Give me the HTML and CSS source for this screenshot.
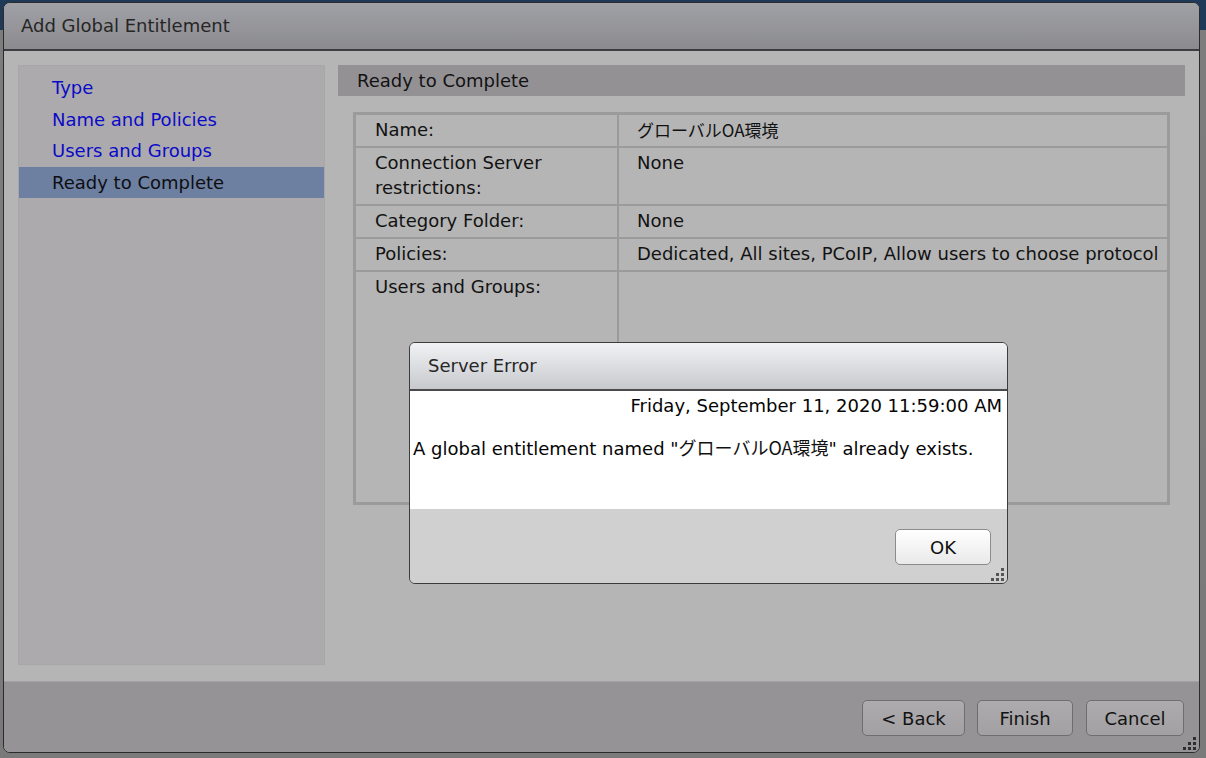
FILE: index.html
```html
<!DOCTYPE html>
<html>
<head>
<meta charset="utf-8">
<link rel="stylesheet" href="styles.css">
</head>
<body>
<div class="window">
  <div class="win-title">Add Global Entitlement</div>
  <div class="win-body">
    <nav class="steps">
      <div class="step link">Type</div>
      <div class="step link">Name and Policies</div>
      <div class="step link">Users and Groups</div>
      <div class="step current">Ready to Complete</div>
    </nav>
    <section class="content">
      <div class="section-head">Ready to Complete</div>
      <table class="summary">
        <tr class="r-name"><td class="k">Name:</td><td class="v jp">グローバルOA環境</td></tr>
        <tr><td class="k">Connection Server restrictions:</td><td class="v">None</td></tr>
        <tr><td class="k">Category Folder:</td><td class="v">None</td></tr>
        <tr><td class="k">Policies:</td><td class="v">Dedicated, All sites, PCoIP, Allow users to choose protocol</td></tr>
        <tr class="r-users"><td class="k">Users and Groups:</td><td class="v"></td></tr>
      </table>
    </section>
  </div>
  <div class="win-foot">
    <button class="btn b-back">&lt; Back</button>
    <button class="btn b-finish">Finish</button>
    <button class="btn b-cancel">Cancel</button>
  </div>
  <svg class="grip grip-main" width="14" height="14" viewBox="0 0 14 14"><g fill="#2e2e2e"><rect x="10" y="1" width="3" height="3"/><rect x="5" y="6" width="3" height="3"/><rect x="10" y="6" width="3" height="3"/><rect x="0" y="11" width="3" height="3"/><rect x="5" y="11" width="3" height="3"/><rect x="10" y="11" width="3" height="3"/></g></svg>
</div>

<div class="err">
  <div class="err-title">Server Error</div>
  <div class="err-body">
    <div class="err-date">Friday, September 11, 2020 11:59:00 AM</div>
    <div class="err-msg">A global entitlement named "<span class="jp">グローバルOA環境</span>" already exists.</div>
  </div>
  <div class="err-foot">
    <button class="btn-ok">OK</button>
  </div>
  <svg class="grip grip-err" width="14" height="14" viewBox="0 0 14 14"><g fill="#555"><rect x="10" y="1" width="3" height="3"/><rect x="5" y="6" width="3" height="3"/><rect x="10" y="6" width="3" height="3"/><rect x="0" y="11" width="3" height="3"/><rect x="5" y="11" width="3" height="3"/><rect x="10" y="11" width="3" height="3"/></g></svg>
</div>
</body>
</html>
```

FILE: styles.css
```css
html, body {
  margin: 0;
  height: 100%;
}
body {
  width: 1206px;
  height: 758px;
  overflow: hidden;
  background: linear-gradient(#1e3a58 0, #1e3a58 30px, #7d7d7d 30px, #7a7a7a 100%);
  padding: 2px 0 0 3px;
  box-sizing: border-box;
  font-family: "DejaVu Sans", Verdana, sans-serif;
  position: relative;
}
.jp {
  font-family: "Noto Sans CJK JP", "DejaVu Sans", sans-serif;
  color: #111;
}
.window {
  position: relative;
  width: 1197px;
  height: 751px;
  box-sizing: border-box;
  border: 1px solid #2b2b2b;
  border-radius: 7px;
  overflow: hidden;
  display: flex;
  flex-direction: column;
  background: #b5b5b5;
}
.win-title {
  height: 46px;
  flex: none;
  border-bottom: 2px solid #3d3d3f;
  background: linear-gradient(#a0a1a6, #8b8b8f);
  color: #262626;
  font-size: 18px;
  line-height: 46px;
  padding-left: 17px;
}
.win-body {
  flex: 1;
  display: flex;
  gap: 13px;
  padding: 14px 14px 16px 14px;
  background: #b5b5b5;
}
.steps {
  width: 307px;
  flex: none;
  box-sizing: border-box;
  background: #adaaad;
  border: 1px solid #a8a6a8;
  padding-top: 6px;
}
.step {
  height: 31.5px;
  line-height: 31px;
  padding-left: 33px;
  font-size: 18px;
}
.step.link { color: #0a0ac8; }
.step.current {
  background: #6d80a1;
  color: #0e0e12;
}
.content {
  flex: 1;
  display: flex;
  flex-direction: column;
}
.section-head {
  height: 31px;
  line-height: 31px;
  background: #949195;
  color: #121212;
  font-size: 18px;
  padding-left: 19px;
}
.summary {
  margin: 16px 0 0 15px;
  width: 817px;
  border-collapse: collapse;
  border: 3px solid #9b9b9b;
  color: #121212;
  font-size: 18px;
}
.summary td {
  border: 2px solid #9b9b9b;
  vertical-align: top;
  line-height: 25px;
  padding: 2px 4px 4px 19px;
}
.summary td.k { width: 238px; }
.summary td.v { padding-left: 18px; }
.summary td.jp { font-size: 17px; }
.r-users td { height: 224px; }

.win-foot {
  height: 71px;
  flex: none;
  background: #959395;
  border-top: 1px solid #a3a1a3;
  display: flex;
  justify-content: flex-end;
  align-items: flex-start;
  gap: 12px;
  padding: 18px 15px 0 0;
  box-sizing: border-box;
}
.btn {
  height: 36px;
  border: 1px solid #6e6d6f;
  border-radius: 5px;
  background: linear-gradient(#adabad, #a2a0a2);
  font-family: "DejaVu Sans", Verdana, sans-serif;
  font-size: 18px;
  color: #121212;
  padding: 0;
}
.b-back { width: 103px; }
.b-finish { width: 96px; margin-right: 1px; }
.b-cancel { width: 98px; }
.grip {
  position: absolute;
}
.grip-main { right: 2px; bottom: 2px; }

.err {
  position: absolute;
  left: 409px;
  top: 342px;
  width: 599px;
  height: 242px;
  box-sizing: border-box;
  border: 1px solid #3c3c3c;
  border-radius: 6px;
  overflow: hidden;
  display: flex;
  flex-direction: column;
  background: #d0d0d0;
}
.err-title {
  height: 46px;
  flex: none;
  border-bottom: 2px solid #4a4a4c;
  background: linear-gradient(#f1f2f4, #c8c9cd);
  color: #262626;
  font-size: 18px;
  line-height: 46px;
  padding-left: 18px;
}
.err-body {
  height: 118px;
  flex: none;
  background: #ffffff;
  color: #050505;
  font-size: 18px;
  padding: 4px 5px 0 3px;
  box-sizing: border-box;
}
.err-date {
  text-align: right;
  line-height: 22px;
}
.err-msg {
  margin-top: 19px;
  line-height: 22px;
}
.err-foot {
  flex: 1;
  background: #d0d0d0;
  display: flex;
  justify-content: flex-end;
  align-items: flex-start;
  padding: 20px 16px 0 0;
}
.btn-ok {
  width: 96px;
  height: 36px;
  border: 1px solid #8c8c8c;
  border-radius: 5px;
  background: linear-gradient(#ffffff, #e9e9e9);
  font-family: "DejaVu Sans", Verdana, sans-serif;
  font-size: 18px;
  color: #111;
  padding: 0;
}
.grip-err { right: 2px; bottom: 2px; }
```
